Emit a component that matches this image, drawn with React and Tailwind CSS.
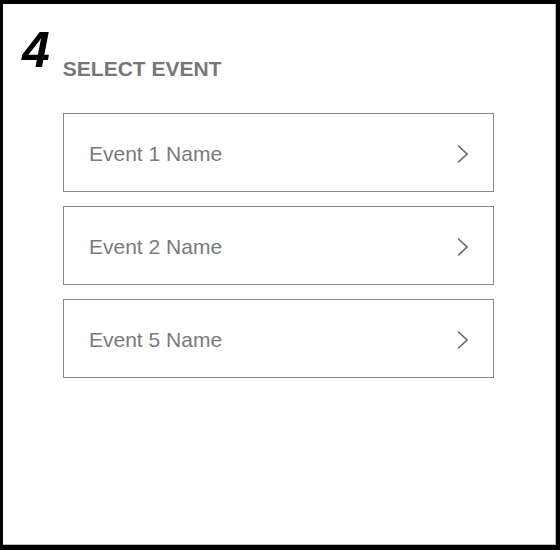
export default function App() {
  const events = ["Event 1 Name", "Event 2 Name", "Event 5 Name"];
  return (
    <div className="w-[560px] h-[550px] bg-black pt-[4px] pl-[3px] pr-[4px] pb-[5px]" style={{ fontFamily: '"Liberation Sans", Arial, sans-serif' }}>
      <div className="w-full h-full bg-white border-r border-b border-[#bdbdbd] flex flex-col">
        <div className="flex items-start pl-[19px] h-[79px]">
          <span className="mt-[21px] text-[50px] leading-none font-bold italic text-black">4</span>
          <span className="ml-[13px] mt-[54px] text-[21px] leading-none font-bold text-[#777777]">SELECT EVENT</span>
        </div>
        <div className="flex flex-col gap-[14px] pl-[60px] pt-[30px]">
          {events.map((e) => (
            <div key={e} className="w-[431px] h-[79px] border border-[#8a8a8a] flex items-center justify-between pl-[25px] pr-[24px] pt-[3px]">
              <span className="text-[21px] text-[#7a7a7a]">{e}</span>
              <svg width="13" height="20" viewBox="0 0 13 20" fill="none">
                <path d="M2 1.5 L11 10 L2 18.5" stroke="#6b6b6b" strokeWidth="1.7" />
              </svg>
            </div>
          ))}
        </div>
      </div>
    </div>
  );
}
